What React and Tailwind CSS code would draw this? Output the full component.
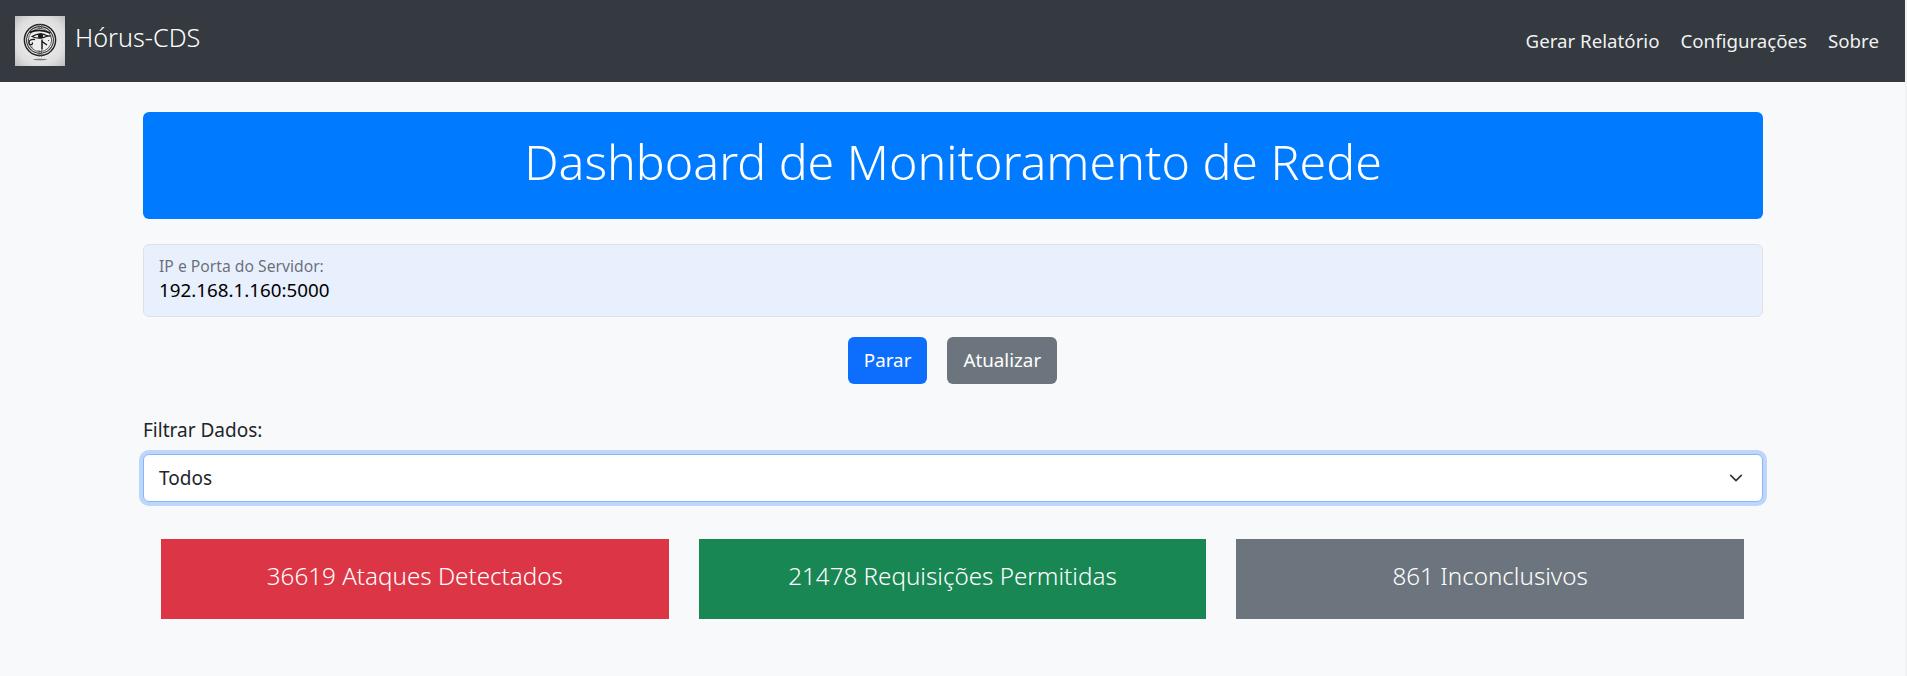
function Logo() {
  return (
    <svg width="50" height="50" viewBox="0 0 50 50" className="shrink-0">
      <defs>
        <radialGradient id="logoBg" cx="50%" cy="50%" r="70%">
          <stop offset="0%" stopColor="#f4f4f4" />
          <stop offset="70%" stopColor="#dedede" />
          <stop offset="100%" stopColor="#bdbdbd" />
        </radialGradient>
      </defs>
      <rect width="50" height="50" fill="url(#logoBg)" />
      <circle cx="25" cy="24" r="15.6" fill="#f0f0f0" stroke="#222" strokeWidth="1.5" />
      <circle cx="25" cy="24" r="13.4" fill="none" stroke="#333" strokeWidth="1.1" />
      <circle cx="25" cy="24" r="11.6" fill="#efefef" stroke="#333" strokeWidth="0.8" />
      <path d="M24 8v5M24 34v7M26.5 8v5M26.5 34v7" stroke="#555" strokeWidth="0.8" />
      <path d="M14.5 16.5q10-4.5 21 0.5" stroke="#1a1a1a" strokeWidth="1.7" fill="none" />
      <path d="M17 20.5q8-5 15.5-0.5q-8 4-15.5 0.5z" fill="#f5f5f5" stroke="#1a1a1a" strokeWidth="1.1" />
      <circle cx="25.5" cy="19.8" r="2.6" fill="#1a1a1a" />
      <path d="M32 20h4" stroke="#1a1a1a" strokeWidth="1.3" />
      <path d="M20 23.5q-6-0.5-6 3q0 3 3 2q1-1 0-2" stroke="#1a1a1a" strokeWidth="1.3" fill="none" />
      <path d="M27 23.5v10M27 25.5l5 3.5" stroke="#1a1a1a" strokeWidth="1.5" fill="none" />
      <circle cx="33.5" cy="24.5" r="0.6" fill="#1a1a1a" />
      <circle cx="17" cy="31" r="0.6" fill="#1a1a1a" />
      <ellipse cx="25" cy="43.5" rx="7" ry="0.8" fill="#777" />
    </svg>
  );
}

export default function App() {
  return (
    <div className="min-h-[676px] bg-[#f8f9fa] text-[#212529] font-['Noto_Sans','Open_Sans',sans-serif] border-r-2 border-[#f1f2f3]">
      <nav className="h-[82px] bg-[#343a40] flex items-center justify-between pl-[15px] pr-[26px]">
        <a className="flex items-center gap-[10px] text-white text-[25.2px] font-light">
          <Logo />
          <span className="relative top-[-3px]">Hórus-CDS</span>
        </a>
        <div className="flex gap-[21px] text-[18.7px] text-white/95 pt-[1px]">
          <a>Gerar Relatório</a>
          <a>Configurações</a>
          <a>Sobre</a>
        </div>
      </nav>
      <div className="ml-[143px] mr-[142px] pt-[30px]">
        <div className="h-[107px] pb-[8px] rounded-[6px] bg-[#007bff] text-white text-[48.3px] font-light flex items-center justify-center">
          Dashboard de Monitoramento de Rede
        </div>
        <div className="mt-[25px] h-[73px] rounded-[6px] bg-[#e8f0fe] border border-[#dee2e6] px-[15px] pt-[11px]">
          <div className="text-[15.7px] leading-[21px] text-[#212529]/65">IP e Porta do Servidor:</div>
          <div className="text-[18.8px] leading-[27px] text-black">192.168.1.160:5000</div>
        </div>
        <div className="mt-[20px] flex justify-center gap-5 pr-[1px]">
          <button className="h-[47px] px-[16px] rounded-[6px] bg-[#0d6efd] text-white text-[18.8px]">Parar</button>
          <button className="h-[47px] px-[16px] rounded-[6px] bg-[#6c757d] text-white text-[18.8px]">Atualizar</button>
        </div>
        <label className="block mt-[33px] text-[19px] leading-[27px]">Filtrar Dados:</label>
        <div className="mt-[10px] h-[48px] rounded-[6px] bg-white border border-[#86b7fe] shadow-[0_0_0_4px_rgba(13,110,253,0.25)] flex items-center justify-between pl-[15px] pr-[19px] text-[19px]">
          <span>Todos</span>
          <svg width="14" height="14" viewBox="0 0 16 16" fill="none" stroke="#343a40" strokeWidth="2" strokeLinecap="round" strokeLinejoin="round">
            <path d="m2 5 6 6 6-6" />
          </svg>
        </div>
        <div className="mt-[37px] grid grid-cols-3 gap-[30px] pl-[18px] pr-[19px]">
          <div className="h-[80px] pb-[6px] bg-[#dc3545] text-white text-[24.2px] font-light flex items-center justify-center">36619 Ataques Detectados</div>
          <div className="h-[80px] pb-[6px] bg-[#198754] text-white text-[24.2px] font-light flex items-center justify-center">21478 Requisições Permitidas</div>
          <div className="h-[80px] pb-[6px] bg-[#6c757d] text-white text-[24.2px] font-light flex items-center justify-center">861 Inconclusivos</div>
        </div>
      </div>
    </div>
  );
}
